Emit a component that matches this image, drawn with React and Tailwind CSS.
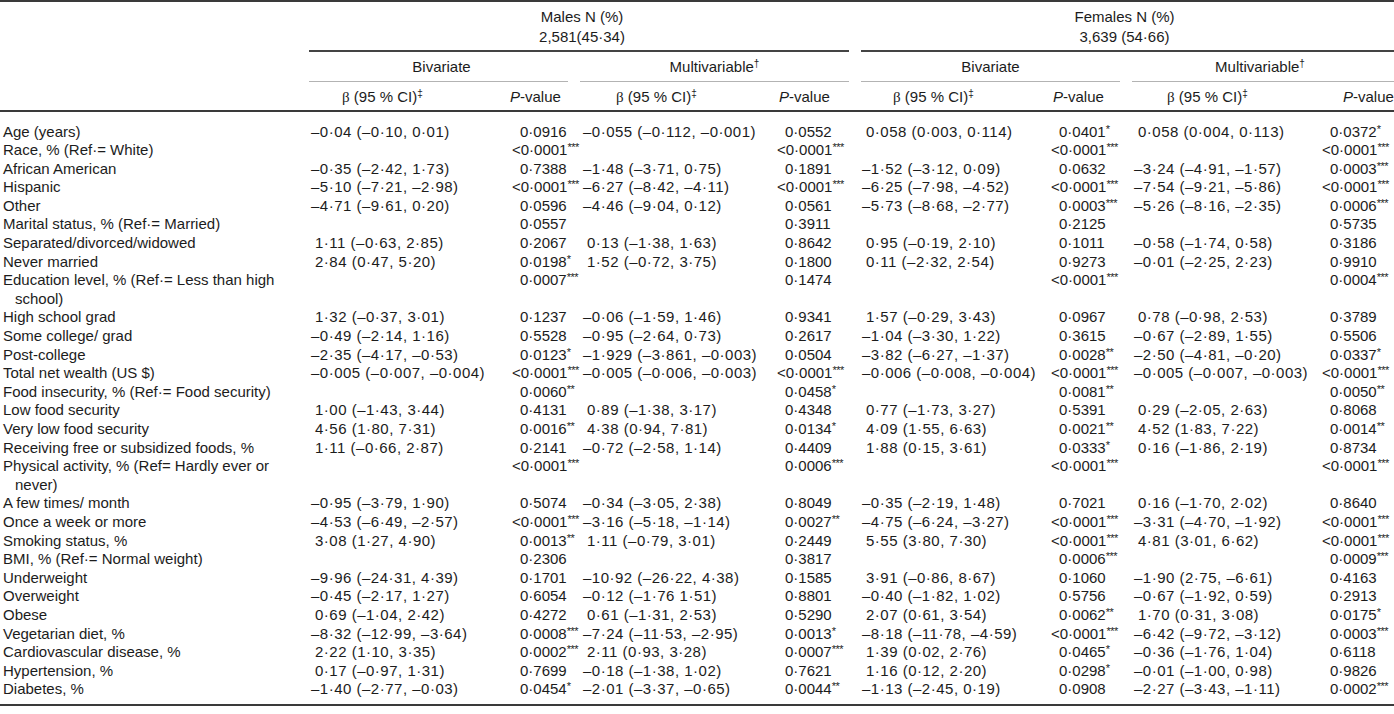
const rows = [
  ["Age (years)", "–0·04 (–0·10, 0·01)", "0·0916", "–0·055 (–0·112, –0·001)", "0·0552", "0·058 (0·003, 0·114)", "0·0401*", "0·058 (0·004, 0·113)", "0·0372*"],
  ["Race, % (Ref·= White)", "", "<0·0001***", "", "<0·0001***", "", "<0·0001***", "", "<0·0001***"],
  ["African American", "–0·35 (–2·42, 1·73)", "0·7388", "–1·48 (–3·71, 0·75)", "0·1891", "–1·52 (–3·12, 0·09)", "0·0632", "–3·24 (–4·91, –1·57)", "0·0003***"],
  ["Hispanic", "–5·10 (–7·21, –2·98)", "<0·0001***", "–6·27 (–8·42, –4·11)", "<0·0001***", "–6·25 (–7·98, –4·52)", "<0·0001***", "–7·54 (–9·21, –5·86)", "<0·0001***"],
  ["Other", "–4·71 (–9·61, 0·20)", "0·0596", "–4·46 (–9·04, 0·12)", "0·0561", "–5·73 (–8·68, –2·77)", "0·0003***", "–5·26 (–8·16, –2·35)", "0·0006***"],
  ["Marital status, % (Ref·= Married)", "", "0·0557", "", "0·3911", "", "0·2125", "", "0·5735"],
  ["Separated/divorced/widowed", "1·11 (–0·63, 2·85)", "0·2067", "0·13 (–1·38, 1·63)", "0·8642", "0·95 (–0·19, 2·10)", "0·1011", "–0·58 (–1·74, 0·58)", "0·3186"],
  ["Never married", "2·84 (0·47, 5·20)", "0·0198*", "1·52 (–0·72, 3·75)", "0·1800", "0·11 (–2·32, 2·54)", "0·9273", "–0·01 (–2·25, 2·23)", "0·9910"],
  [["Education level, % (Ref·= Less than high", "school)"], "", "0·0007***", "", "0·1474", "", "<0·0001***", "", "0·0004***"],
  ["High school grad", "1·32 (–0·37, 3·01)", "0·1237", "–0·06 (–1·59, 1·46)", "0·9341", "1·57 (–0·29, 3·43)", "0·0967", "0·78 (–0·98, 2·53)", "0·3789"],
  ["Some college/ grad", "–0·49 (–2·14, 1·16)", "0·5528", "–0·95 (–2·64, 0·73)", "0·2617", "–1·04 (–3·30, 1·22)", "0·3615", "–0·67 (–2·89, 1·55)", "0·5506"],
  ["Post-college", "–2·35 (–4·17, –0·53)", "0·0123*", "–1·929 (–3·861, –0·003)", "0·0504", "–3·82 (–6·27, –1·37)", "0·0028**", "–2·50 (–4·81, –0·20)", "0·0337*"],
  ["Total net wealth (US $)", "–0·005 (–0·007, –0·004)", "<0·0001***", "–0·005 (–0·006, –0·003)", "<0·0001***", "–0·006 (–0·008, –0·004)", "<0·0001***", "–0·005 (–0·007, –0·003)", "<0·0001***"],
  ["Food insecurity, % (Ref·= Food security)", "", "0·0060**", "", "0·0458*", "", "0·0081**", "", "0·0050**"],
  ["Low food security", "1·00 (–1·43, 3·44)", "0·4131", "0·89 (–1·38, 3·17)", "0·4348", "0·77 (–1·73, 3·27)", "0·5391", "0·29 (–2·05, 2·63)", "0·8068"],
  ["Very low food security", "4·56 (1·80, 7·31)", "0·0016**", "4·38 (0·94, 7·81)", "0·0134*", "4·09 (1·55, 6·63)", "0·0021**", "4·52 (1·83, 7·22)", "0·0014**"],
  ["Receiving free or subsidized foods, %", "1·11 (–0·66, 2·87)", "0·2141", "–0·72 (–2·58, 1·14)", "0·4409", "1·88 (0·15, 3·61)", "0·0333*", "0·16 (–1·86, 2·19)", "0·8734"],
  [["Physical activity, % (Ref= Hardly ever or", "never)"], "", "<0·0001***", "", "0·0006***", "", "<0·0001***", "", "<0·0001***"],
  ["A few times/ month", "–0·95 (–3·79, 1·90)", "0·5074", "–0·34 (–3·05, 2·38)", "0·8049", "–0·35 (–2·19, 1·48)", "0·7021", "0·16 (–1·70, 2·02)", "0·8640"],
  ["Once a week or more", "–4·53 (–6·49, –2·57)", "<0·0001***", "–3·16 (–5·18, –1·14)", "0·0027**", "–4·75 (–6·24, –3·27)", "<0·0001***", "–3·31 (–4·70, –1·92)", "<0·0001***"],
  ["Smoking status, %", "3·08 (1·27, 4·90)", "0·0013**", "1·11 (–0·79, 3·01)", "0·2449", "5·55 (3·80, 7·30)", "<0·0001***", "4·81 (3·01, 6·62)", "<0·0001***"],
  ["BMI, % (Ref·= Normal weight)", "", "0·2306", "", "0·3817", "", "0·0006***", "", "0·0009***"],
  ["Underweight", "–9·96 (–24·31, 4·39)", "0·1701", "–10·92 (–26·22, 4·38)", "0·1585", "3·91 (–0·86, 8·67)", "0·1060", "–1·90 (2·75, –6·61)", "0·4163"],
  ["Overweight", "–0·45 (–2·17, 1·27)", "0·6054", "–0·12 (–1·76 1·51)", "0·8801", "–0·40 (–1·82, 1·02)", "0·5756", "–0·67 (–1·92, 0·59)", "0·2913"],
  ["Obese", "0·69 (–1·04, 2·42)", "0·4272", "0·61 (–1·31, 2·53)", "0·5290", "2·07 (0·61, 3·54)", "0·0062**", "1·70 (0·31, 3·08)", "0·0175*"],
  ["Vegetarian diet, %", "–8·32 (–12·99, –3·64)", "0·0008***", "–7·24 (–11·53, –2·95)", "0·0013*", "–8·18 (–11·78, –4·59)", "<0·0001***", "–6·42 (–9·72, –3·12)", "0·0003***"],
  ["Cardiovascular disease, %", "2·22 (1·10, 3·35)", "0·0002***", "2·11 (0·93, 3·28)", "0·0007***", "1·39 (0·02, 2·76)", "0·0465*", "–0·36 (–1·76, 1·04)", "0·6118"],
  ["Hypertension, %", "0·17 (–0·97, 1·31)", "0·7699", "–0·18 (–1·38, 1·02)", "0·7621", "1·16 (0·12, 2·20)", "0·0298*", "–0·01 (–1·00, 0·98)", "0·9826"],
  ["Diabetes, %", "–1·40 (–2·77, –0·03)", "0·0454*", "–2·01 (–3·37, –0·65)", "0·0044**", "–1·13 (–2·45, 0·19)", "0·0908", "–2·27 (–3·43, –1·11)", "0·0002***"],
];

// left padding per beta column, for values led by a minus and for positive ones
const betaPad = ["pl-[2px]", "pl-[9px]", "pl-[7px]", "pl-[8px]"];
const betaPadPos = ["pl-[6px]", "pl-[13px]", "pl-[11px]", "pl-[12px]"];

const Beta = ({ value, i }) => {
  if (!value) return <div />;
  const neg = value.startsWith("–");
  return (
    <div className={`whitespace-nowrap tracking-[0.5px] ${neg ? betaPad[i] : betaPadPos[i]}`}>
      {value}
    </div>
  );
};

const PVal = ({ value }) => {
  const m = value.match(/^(.*?)(\**)$/);
  const lt = value.startsWith("<");
  return (
    <div className={`whitespace-nowrap ${lt ? "pl-[3px]" : "pl-[11px]"}`}>
      {m[1]}
      {m[2] && (
        <span className="text-[11px] leading-none tracking-[-0.5px] align-top relative top-[1px]">
          {m[2]}
        </span>
      )}
    </div>
  );
};

const Label = ({ label }) => {
  if (Array.isArray(label)) {
    return (
      <div className="pl-[3px]">
        <div className="whitespace-nowrap">{label[0]}</div>
        <div className="pl-[12px]">{label[1]}</div>
      </div>
    );
  }
  return <div className="pl-[3px] whitespace-nowrap">{label}</div>;
};

const BetaHead = ({ pad }) => (
  <div className={`pt-[5px] pb-[3px] leading-[20px] whitespace-nowrap ${pad}`}>
    <span className="font-['Liberation_Serif',serif] text-[15px]">β</span> (95 % CI)
    <span className="text-[10px] leading-none align-top relative top-[2px]">‡</span>
  </div>
);

const PHead = ({ pad }) => (
  <div className={`pt-[5px] pb-[3px] leading-[20px] whitespace-nowrap ${pad}`}>
    <i>P</i>-value
  </div>
);

const GroupHead = ({ title, dagger, line }) => (
  <div className="flex flex-col">
    <div className="pt-[5px] pb-[4px] leading-[20px] text-center">
      {title}
      {dagger && <span className="text-[10px] leading-none align-top relative top-[2px]">†</span>}
    </div>
    <div className={`h-px bg-[#b3b3b3] ${line}`} />
  </div>
);

const cols = "grid grid-cols-[309px_200px_65px_200px_81px_193px_78px_193px_75px]";

export default function App() {
  return (
    <div className="w-[1394px] h-[714px] bg-white text-[#1c1c1c] text-[15px] font-['Liberation_Sans',Arial,sans-serif] overflow-hidden">
      <div className="h-[2px] bg-[#3a3a3a]" />
      <div className={cols}>
        {/* sex row */}
        <div />
        <div className="col-span-4 flex flex-col">
          <div className="pt-[5px] pb-[3px] leading-[20px] text-center">
            <div>Males N (%)</div>
            <div>2,581(45·34)</div>
          </div>
          <div className="h-[1.5px] bg-[#444] mr-[6px]" />
        </div>
        <div className="col-span-4 flex flex-col">
          <div className="pt-[5px] pb-[3px] leading-[20px] text-center">
            <div>Females N (%)</div>
            <div>3,639 (54·66)</div>
          </div>
          <div className="h-[1.5px] bg-[#444] ml-[6px]" />
        </div>

        {/* model row */}
        <div />
        <div className="col-span-2">
          <GroupHead title="Bivariate" line="mr-[6px]" />
        </div>
        <div className="col-span-2">
          <GroupHead title="Multivariable" dagger line="mx-[6px]" />
        </div>
        <div className="col-span-2">
          <GroupHead title="Bivariate" line="mx-[6px]" />
        </div>
        <div className="col-span-2">
          <GroupHead title="Multivariable" dagger line="ml-[6px]" />
        </div>

        {/* column heads */}
        <div />
        <BetaHead pad="pl-[33px]" />
        <PHead pad="pl-[1px]" />
        <BetaHead pad="pl-[42px]" />
        <PHead pad="pl-[5px]" />
        <BetaHead pad="pl-[38px]" />
        <PHead pad="pl-[5px]" />
        <BetaHead pad="pl-[41px]" />
        <PHead pad="pl-[24px]" />
      </div>
      <div className="h-[2px] bg-[#3a3a3a]" />

      <div className={`${cols} pt-[11px] pb-[5px] leading-[18.6px]`}>
        {rows.map((r, idx) => (
          <div key={idx} className="contents">
            <Label label={r[0]} />
            <Beta value={r[1]} i={0} />
            <PVal value={r[2]} />
            <Beta value={r[3]} i={1} />
            <PVal value={r[4]} />
            <Beta value={r[5]} i={2} />
            <PVal value={r[6]} />
            <Beta value={r[7]} i={3} />
            <PVal value={r[8]} />
          </div>
        ))}
      </div>
      <div className="h-[2px] bg-[#3a3a3a]" />
    </div>
  );
}
